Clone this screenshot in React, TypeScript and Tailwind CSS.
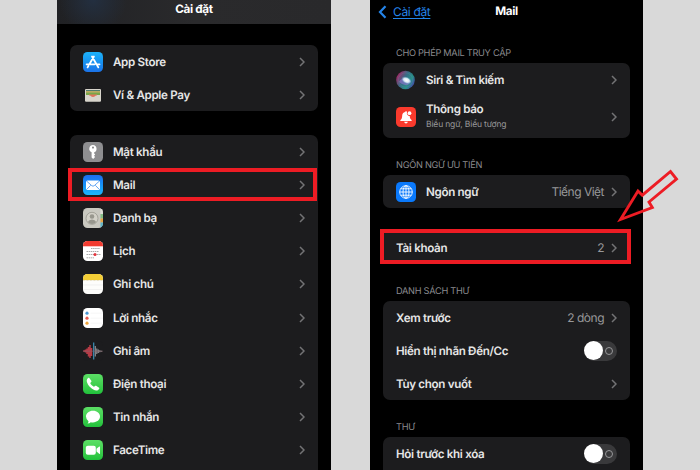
import React from 'react';

interface RowProps {
    title: string;
    icon?: React.ReactNode;
    subtitle?: string;
    value?: string;
    toggle?: boolean;
    className?: string;
}

const Chevron = () => (
    <svg className="w-[6px] h-[10px] shrink-0 text-[#737375]" viewBox="0 0 6 10" fill="none" stroke="currentColor" strokeWidth={1.5}><path d="M1 1l4 4-4 4" /></svg>
);

const Toggle = () => (
    <div className="w-[33px] h-5 rounded-full bg-[#39393b] flex items-center justify-between pr-[4px]">
        <span className="size-[19px] rounded-full bg-white" />
        <span className="size-[8px] rounded-full border border-[#98989a]" />
    </div>
);

const Row: React.FC<RowProps> = ({ title, icon, subtitle, value, toggle = false, className = 'h-[33.2px]' }) => (
    <div className={`flex items-center shrink-0 pl-[13px] pr-[13px] ${className}`}>
        {icon && <div className="size-5 mr-[10px] shrink-0">{icon}</div>}
        <div className="flex-1 whitespace-nowrap pt-[1px]">
            <div className={subtitle ? 'leading-[15px] -mt-[2px]' : 'leading-[15px]'}>{title}</div>
            {subtitle && <div className="text-[8.5px] leading-[12px] mt-[2px] font-normal tracking-[-0.15px] text-[#98989a]">{subtitle}</div>}
        </div>
        {value && <span className="mr-[7px] text-[12px] font-normal tracking-[-0.5px] text-[#98989a]">{value}</span>}
        {toggle ? <Toggle /> : <Chevron />}
    </div>
);

const Tile: React.FC<{ className: string; children?: React.ReactNode }> = ({ className, children }) => (
    <div className={`size-5 rounded-[4.5px] overflow-hidden ${className}`}>
        <svg viewBox="0 0 20 20" className="size-5">{children}</svg>
    </div>
);

const AppStoreIcon = () => (
    <Tile className="bg-linear-to-b from-[#1eb2f8] to-[#1b72e8]">
        <path d="M10.900 4.500L6.400 12.300M9 4.500l4.900 8.500M3.600 12.300h8M13.500 12.300h3M5.400 14l-.8 1.400M14.500 14l.8 1.400" stroke="white" strokeWidth="1.800" strokeLinecap="round" fill="none" />
    </Tile>
);

const WalletIcon = () => (
    <Tile className="bg-[#1c1c1e]">
        <rect x="2" y="4" width="16" height="12.500" rx="1" fill="#d8d5cc" />
        <rect x="3" y="5" width="14" height="1.500" fill="#4f7b6d" />
        <rect x="3" y="6.300" width="14" height="1.500" fill="#c9a94c" />
        <rect x="3" y="7.500" width="14" height="2.500" fill="#78a64a" />
        <path d="M6 9.500h8v1.300l-4 2-4-2z" fill="#e1745d" />
        <path d="M2 10.400h5c.5 0 1 1.500 3 1.500s2.500-1.500 3-1.500h5v5.200a1 1 0 01-1 1H3a1 1 0 01-1-1z" fill="#d8d5cc" />
    </Tile>
);

const KeyIcon = () => (
    <Tile className="bg-[#8e8e90]">
        <path fillRule="evenodd" fill="white" d="M10 3a3.800 3.800 0 00-1.400 7.300v5.200L10.100 17l2-2-1.100-1.200 1.200-1.200-1-1.200v-1.100A3.800 3.800 0 0010 3zm0 1.500a1.100 1.100 0 110 2.200 1.100 1.100 0 010-2.200z" />
    </Tile>
);

const MailIcon = () => (
    <Tile className="bg-linear-to-b from-[#1e6df0] to-[#1bb6fa]">
        <rect x="3" y="5.500" width="14" height="9.500" rx="1.500" fill="white" />
        <path d="M3.500 6l5.300 4.700q1.200 1 2.400 0L16.500 6M3.500 14.600l4.200-4.300M16.500 14.600l-4.200-4.300" fill="none" stroke="#3d8fee" strokeWidth=".8" />
    </Tile>
);

const ContactsIcon = () => (
    <Tile className="bg-[#c9c8c0]">
        <circle cx="9" cy="10.300" r="6" fill="#d3d1c8" stroke="#98978e" strokeWidth=".8" />
        <circle cx="9" cy="8.500" r="2.300" fill="#98978e" />
        <path d="M4.900 14q1-2.500 4.100-2.500t4.100 2.500q-1.700 2-4.100 2t-4.100-2z" fill="#98978e" />
        <rect x="17.500" y="0" width="2.500" height="6" fill="#dedcd4" />
        <rect x="17.500" y="6" width="2.500" height="4.500" fill="#83bb83" />
        <rect x="17.500" y="10.500" width="2.500" height="4" fill="#e6a242" />
        <rect x="17.500" y="14.500" width="2.500" height="5.500" fill="#5eb5c8" />
    </Tile>
);

const CalendarIcon = () => (
    <Tile className="bg-white">
        <rect width="20" height="5.300" fill="#f23b30" />
        <path d="M8 7.500h9M3.500 10.500h12.500M3.500 13.500h14M3.500 16.800h7.500" stroke="#939393" strokeWidth=".8" strokeDasharray="1.500 .6" />
        <circle cx="12" cy="13.500" r="1.500" fill="#e5343d" />
    </Tile>
);

const NotesIcon = () => (
    <Tile className="bg-[#fdfdfb]">
        <rect width="20" height="6" fill="#f4ce36" />
        <path d="M0 6.400h20" stroke="#c9b16a" strokeWidth=".6" strokeDasharray=".7 .7" />
        <path d="M0 11h20M0 15.500h20" stroke="#e9e9e9" strokeWidth=".6" />
    </Tile>
);

const RemindersIcon = () => (
    <Tile className="bg-white">
        <circle cx="4" cy="5.200" r="1.600" fill="#4a98d4" />
        <circle cx="4" cy="10.200" r="1.600" fill="#e75a50" />
        <circle cx="4" cy="15.200" r="1.600" fill="#efa53c" />
        <path d="M7.500 5.200H20M7.500 10.200H20M7.500 15.200H20" stroke="#ececec" strokeWidth=".5" />
    </Tile>
);

const VoiceIcon = () => (
    <Tile className="bg-[#1c1c1e]">
        <path d="M1 9.300v1.500M2.500 8.500v3M4 7.500v5.500M5.500 6v9.500M7 4v13M8.500 7v8" stroke="#b53b46" strokeWidth="1.500" />
        <path d="M10.700 1.500v17" stroke="#3e91b7" strokeWidth="1.200" />
        <path d="M12.300 5v10.500M13.800 7.500v5.500M15.300 8.500v3.500M16.800 9.300v2M18.300 9.700v1" stroke="#8e8e91" strokeWidth="1.200" />
        <path d="M0 10.200h20" stroke="#84646b" strokeWidth=".6" />
    </Tile>
);

const PhoneIcon = () => (
    <Tile className="bg-linear-to-b from-[#5bdf65] to-[#1fc13b]">
        <path fill="white" d="M4 5.400c.6-1.200 1.700-2 2.300-1.400l2 2.700c.4.600.1 1.100-.4 1.600l-.6.700c-.2.300.4 1.200 1.500 2.300s2 1.600 2.300 1.400l.8-.6c.5-.4 1-.6 1.600-.2l2.600 1.900c.7.600-.1 1.800-1.300 2.400-2.200 1-5.300-.8-7.500-3S3 7.500 4 5.400z" />
    </Tile>
);

const MessagesIcon = () => (
    <Tile className="bg-linear-to-b from-[#5bdf65] to-[#1fc13b]">
        <path fill="white" d="M10 3.800c4 0 7 2.500 7 5.800s-3 5.800-7 5.800q-1.200 0-2.200-.2-1.300 1.200-3.300 1.200 1.100-.9 1-2.200Q3 12.500 3 9.600c0-3.300 3-5.800 7-5.800z" />
    </Tile>
);

const FaceTimeIcon = () => (
    <Tile className="bg-linear-to-b from-[#5bdf65] to-[#1fc13b]">
        <rect x="2.800" y="5.700" width="10" height="9" rx="2" fill="white" />
        <path d="M13.500 8.800l2.700-2.200q.8-.5.800.3v6.500q0 .8-.8.300l-2.700-2.200z" fill="white" />
    </Tile>
);

const SiriIcon = () => (
    <svg viewBox="0 0 20 20" className="size-5">
        <defs>
            <linearGradient id="siri" x1="0" y1=".2" x2="1" y2=".8">
                <stop offset="0" stopColor="#b31e62" />
                <stop offset=".42" stopColor="#376c86" />
                <stop offset=".7" stopColor="#278f87" />
                <stop offset="1" stopColor="#4a3dae" />
            </linearGradient>
            <radialGradient id="glow">
                <stop offset="0" stopColor="white" />
                <stop offset=".55" stopColor="#e3f3fa" stopOpacity=".9" />
                <stop offset="1" stopColor="#6aa8dc" stopOpacity="0" />
            </radialGradient>
        </defs>
        <circle cx="9.500" cy="10" r="9.300" fill="url(#siri)" />
        <path d="M3 12q4-7 12-1-2 5-6 4-4-1-6-3z" fill="#9475d3" fillOpacity=".6" />
        <circle cx="9.500" cy="10" r="7.200" fill="none" stroke="#83b5bc" strokeOpacity=".3" strokeWidth=".5" />
        <ellipse cx="10.500" cy="10" rx="5.500" ry="3.500" transform="rotate(25 10 10)" fill="url(#glow)" />
    </svg>
);

const BellIcon = () => (
    <Tile className="bg-[#fa3a2d]">
        <path fill="white" d="M10 4.200c.6 0 1 .4 1 1a2.800 2.800 0 002.700 3.800c.2 2.400.7 3.100 1.800 4.100.4.400.2 1-.4 1H4.900c-.6 0-.8-.6-.4-1 1.300-1.200 1.600-2.100 1.700-4.500.1-1.800 1.100-3.100 2.800-3.600.1-.5.500-.8 1-.8zM8.100 14.800h3.800q-.4 1.600-1.900 1.600t-1.900-1.600z" />
        <circle cx="13.500" cy="6.200" r="1.900" fill="white" />
    </Tile>
);

const GlobeIcon = () => (
    <Tile className="bg-[#0a79fb]">
        <g fill="none" stroke="white" strokeWidth=".9">
            <circle cx="10" cy="10" r="6.300" />
            <ellipse cx="10" cy="10" rx="3" ry="6.300" />
            <path d="M10 3.700v12.600M3.700 10h12.600M4.700 6.800h10.600M4.700 13.200h10.600" />
        </g>
    </Tile>
);

const SectionLabel: React.FC<{ children: React.ReactNode; className: string }> = ({ children, className }) => (
    <div className={`pl-[13px] text-[9.2px] leading-[12px] font-normal tracking-[-0.28px] text-[#8a8a8e] whitespace-nowrap ${className}`}>{children}</div>
);

const apps = [
    { title: 'Mật khẩu', icon: <KeyIcon /> },
    { title: 'Mail', icon: <MailIcon /> },
    { title: 'Danh bạ', icon: <ContactsIcon /> },
    { title: 'Lịch', icon: <CalendarIcon /> },
    { title: 'Ghi chú', icon: <NotesIcon /> },
    { title: 'Lời nhắc', icon: <RemindersIcon /> },
    { title: 'Ghi âm', icon: <VoiceIcon /> },
    { title: 'Điện thoại', icon: <PhoneIcon /> },
    { title: 'Tin nhắn', icon: <MessagesIcon /> },
    { title: 'FaceTime', icon: <FaceTimeIcon /> },
];

const SettingsScreen = () => (
    <div className="w-[274px] h-full bg-black overflow-hidden">
        <div className="h-6 bg-linear-to-r from-[#202124] via-[#2a2a2c] to-[#29292b]">
            <div className="h-6 bg-[radial-gradient(circle_at_36px_0,#232f40,transparent_34px)] text-center text-[11.7px] leading-[19px] font-bold text-white">Cài đặt</div>
        </div>
        <div className="px-[13px] pt-[21px]">
            <div className="bg-[#1c1c1e] rounded-[7px]">
                <Row title="App Store" icon={<AppStoreIcon />} className="h-[33px]" />
                <Row title="Ví & Apple Pay" icon={<WalletIcon />} className="h-[33px]" />
            </div>
            <div className="mt-[24px] bg-[#1c1c1e] rounded-t-[7px] h-[340px]">
                {apps.map(app => (
                    <div key={app.title} className="relative">
                        <Row title={app.title} icon={app.icon} />
                        {app.title === 'Mail' && <div className="absolute -left-[2px] right-px top-0 h-[33px] border-4 border-[#ed1c24]" />}
                    </div>
                ))}
            </div>
        </div>
    </div>
);

const MailScreen = () => (
    <div className="w-[273px] h-full bg-black overflow-hidden pl-[13px] pr-[13px]">
        <div className="grid grid-cols-3 h-6 -mx-[13px] items-center">
            <div className="flex items-center pl-[4px] text-[#2484e9]">
                <svg className="w-[18px] h-[18px]" viewBox="0 0 18 18" fill="none" stroke="currentColor" strokeWidth={2.2}><path d="M11.500 3.300L6 9l5.500 5.700" /></svg>
                <span className="ml-[1px] text-[12px] font-normal tracking-[-0.35px] underline underline-offset-2">Cài đặt</span>
            </div>
            <div className="text-center text-[11.7px] font-bold text-white">Mail</div>
        </div>
        <SectionLabel className="mt-[24px]">CHO PHÉP MAIL TRUY CẬP</SectionLabel>
        <div className="mt-[3px] bg-[#1c1c1e] rounded-[7px]">
            <Row title="Siri & Tìm kiếm" icon={<SiriIcon />} className="h-[33px]" />
            <Row title="Thông báo" subtitle="Biểu ngữ, Biểu tượng" icon={<BellIcon />} className="h-[42px]" />
        </div>
        <SectionLabel className="mt-[22px]">NGÔN NGỮ ƯU TIÊN</SectionLabel>
        <div className="mt-[3px] bg-[#1c1c1e] rounded-[7px]">
            <Row title="Ngôn ngữ" value="Tiếng Việt" icon={<GlobeIcon />} className="h-[33px]" />
        </div>
        <div className="mt-[23px] relative bg-[#1c1c1e]">
            <Row title="Tài khoản" value="2" className="h-[33px]" />
            <div className="absolute -left-[3px] -right-px -top-[2px] h-[35px] border-4 border-[#ed1c24]" />
        </div>
        <SectionLabel className="mt-[22px]">DANH SÁCH THƯ</SectionLabel>
        <div className="mt-[3px] bg-[#1c1c1e] rounded-[7px]">
            <Row title="Xem trước" value="2 dòng" className="h-[33px]" />
            <Row title="Hiển thị nhãn Đến/Cc" toggle className="h-[33px]" />
            <Row title="Tùy chọn vuốt" className="h-[33px]" />
        </div>
        <SectionLabel className="mt-[22px]">THƯ</SectionLabel>
        <div className="mt-[3px] bg-[#1c1c1e] rounded-t-[7px] h-[40px]">
            <Row title="Hỏi trước khi xóa" toggle className="h-[33px]" />
        </div>
    </div>
);

export default function App() {
    return (
        <div className="relative w-[700px] h-[470px] overflow-hidden bg-[#d9d9d9] pl-[57px] flex gap-[39px] font-['Inter','Liberation_Sans',sans-serif] text-[11.6px] tracking-[-0.32px] font-[560] text-[#e6e6e6] [text-rendering:geometricPrecision]">
            <SettingsScreen />
            <MailScreen />
            <svg className="absolute left-[615px] top-[165px] w-[68px] h-[60px]" viewBox="615 165 68 60" fill="none">
                <path d="M620.500 219.500L638 191l4.300 4.200L670.500 171.500l6 7.500-27.500 23 3.300 5.500z" stroke="#ed1c24" strokeWidth="2.900" />
            </svg>
        </div>
    );
}
